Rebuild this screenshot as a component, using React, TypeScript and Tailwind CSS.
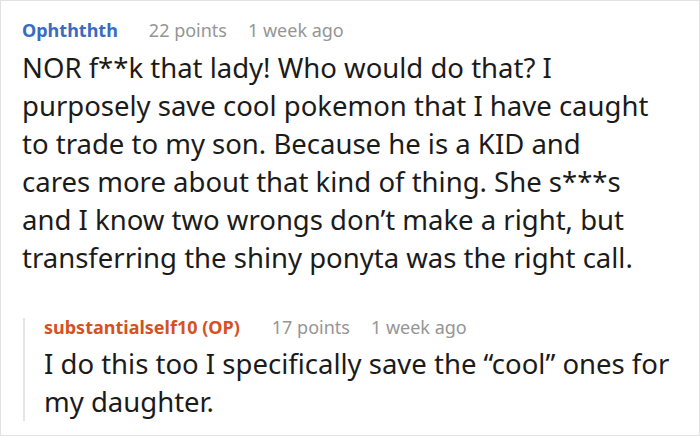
export default function App() {
  return (
    <div
      className="w-[700px] h-[436px] border border-[#e2e2e2] bg-white box-border overflow-hidden"
      style={{ fontFamily: '"Noto Sans", "Open Sans", sans-serif' }}
    >
      <div className="pl-[21px] pt-[16px] pr-2">
        <div className="flex items-center h-[26px] leading-[26px] text-[18px] whitespace-nowrap">
          <span className="font-bold text-[#3a6bbf]">Ophththth</span>
          <span className="ml-[31px] text-[#959595]">22 points</span>
          <span className="ml-[21px] text-[#959595]">1 week ago</span>
        </div>
        <p className="mt-[6px] text-[27.5px] leading-[38px] text-[#1b1b1b] whitespace-nowrap">
          NOR f**k that lady! Who would do that? I<br />
          purposely save cool pokemon that I have caught<br />
          to trade to my son. Because he is a KID and<br />
          cares more about that kind of thing. She s***s<br />
          and I know two wrongs don’t make a right, but<br />
          transferring the shiny ponyta was the right call.
        </p>
        <div className="mt-[48px] ml-[1px] border-l-2 border-[#e4e4e4] pl-[19px]">
          <div className="-mt-[7px] flex items-center h-[18px] leading-[18px] text-[18px] whitespace-nowrap">
            <span className="font-bold text-[#d4521f]">substantialself10 (OP)</span>
            <span className="ml-[32px] text-[#959595]">17 points</span>
            <span className="ml-[21px] text-[#959595]">1 week ago</span>
          </div>
          <p className="mt-[9px] -mb-[4px] text-[27.5px] leading-[38px] text-[#1b1b1b] whitespace-nowrap">
            I do this too I specifically save the “cool” ones for
            <br />
            my daughter.
          </p>
        </div>
      </div>
    </div>
  );
}
